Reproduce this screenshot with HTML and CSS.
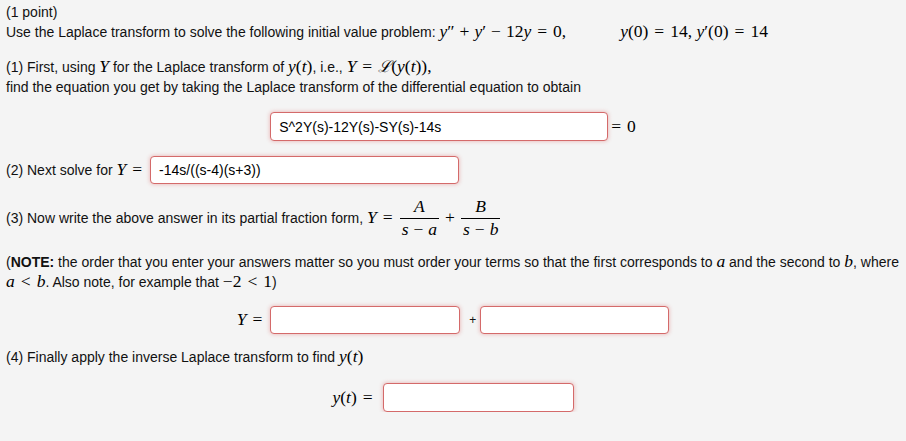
FILE: index.html
```html
<!DOCTYPE html>
<html>
<head>
<meta charset="utf-8">
<link rel="stylesheet" href="styles.css">
</head>
<body>
<div class="wrap">
  <div class="line">(1 point)</div>
  <div class="line">Use the Laplace transform to solve the following initial value problem: <span class="m"><i>y</i>″<span class="bin">+</span><i>y</i>′<span class="bin">−</span>12<i>y</i><span class="op">=</span>0,</span><span class="quad"></span><span class="m"><i>y</i>(0)<span class="op">=</span>14, <i>y</i>′(0)<span class="op">=</span>14</span></div>

  <div class="line gap15">(1) First, using <span class="m"><i>Y</i></span> for the Laplace transform of <span class="m"><i>y</i>(<i>t</i>)</span>, i.e., <span class="m"><i>Y</i><span class="op">=</span><span class="cal">ℒ</span>(<i>y</i>(<i>t</i>)),</span></div>
  <div class="line">find the equation you get by taking the Laplace transform of the differential equation to obtain</div>

  <div class="display d1">
    <div class="ans w338">S^2Y(s)-12Y(s)-SY(s)-14s</div>
    <span class="m eq0"><span class="op">=</span>0</span>
  </div>

  <div class="row r2">
    <span>(2) Next solve for&nbsp;</span><span class="m"><i>Y</i><span class="op">=</span></span>
    <div class="ans w309">-14s/((s-4)(s+3))</div>
  </div>

  <div class="row r3">
    <span>(3) Now write the above answer in its partial fraction form,&nbsp;</span>
    <span class="m"><i>Y</i><span class="op">=</span></span>
    <span class="frac m"><span class="num"><i>A</i></span><span class="den"><i>s</i><span class="bin">−</span><i>a</i></span></span>
    <span class="m plus">+</span>
    <span class="frac m"><span class="num"><i>B</i></span><span class="den"><i>s</i><span class="bin">−</span><i>b</i></span></span>
  </div>

  <div class="note">(<b>NOTE:</b> the order that you enter your answers matter so you must order your terms so that the first corresponds to <span class="m"><i>a</i></span> and the second to <span class="m"><i>b</i></span>, where<br><span class="m"><i>a</i><span class="op">&lt;</span><i>b</i></span>. Also note, for example that <span class="m">−2<span class="op">&lt;</span>1</span>)</div>

  <div class="display d3">
    <span class="m"><i>Y</i><span class="op">=</span></span>
    <div class="ans w190"></div>
    <span class="smallplus">+</span>
    <div class="ans w189"></div>
  </div>

  <div class="line gap4">(4) Finally apply the inverse Laplace transform to find <span class="m"><i>y</i>(<i>t</i>)</span></div>

  <div class="display d4">
    <span class="m"><i>y</i>(<i>t</i>)<span class="op">=</span></span>
    <div class="ans w191"></div>
  </div>
</div>
</body>
</html>
```

FILE: styles.css
```css
html, body {
  margin: 0;
  padding: 0;
  background: #f4f4f4;
}
body {
  font-family: "Liberation Sans", Arial, sans-serif;
  font-size: 14px;
  color: #111;
}
.wrap {
  padding: 2px 6px 0 6px;
}
.line {
  height: 20px;
  line-height: 20px;
  white-space: nowrap;
}
.gap15 {
  margin-top: 15px;
}
.gap4 {
  margin-top: 13px;
}
.m {
  font-family: "Liberation Serif", "Times New Roman", serif;
  font-size: 17.5px;
  color: #000;
  line-height: 1;
}
.m i {
  font-style: italic;
}
.op {
  display: inline-block;
  margin: 0 6px;
  font-style: normal;
}
.bin {
  display: inline-block;
  margin: 0 5px;
  font-style: normal;
}
.cal {
  font-family: "DejaVu Serif", serif;
  font-style: italic;
  font-size: 16px;
}
.quad {
  display: inline-block;
  width: 54px;
}
.display {
  display: flex;
  justify-content: center;
  align-items: center;
}
.row {
  display: flex;
  align-items: center;
}
.d1 {
  margin-top: 15px;
  height: 29px;
}
.eq0 {
  margin-left: 3px;
}
.eq0 .op {
  margin-left: 0;
}
.r2 {
  margin-top: 15px;
  height: 28px;
}
.r2 .ans {
  margin-left: 2px;
}
.r3 {
  margin-top: 16px;
  height: 36px;
}
.frac {
  display: inline-flex;
  flex-direction: column;
  align-items: center;
  padding: 0 1px;
}
.frac .num {
  display: block;
  border-bottom: 1.5px solid #000;
  padding: 0 4px 2px;
  width: 100%;
  text-align: center;
  box-sizing: border-box;
}
.frac .den {
  display: block;
  padding: 2px 2px 0;
  white-space: nowrap;
}
.plus {
  margin: 0 5px;
}
.note {
  margin-top: 16px;
  line-height: 20px;
}
.d3 {
  margin-top: 14px;
  height: 28px;
}
.d3 .ans {
  margin-left: 2px;
}
.smallplus {
  font-size: 12px;
  margin: 0 4px 0 9px;
}
.d3 .smallplus + .ans {
  margin-left: 0;
}
.d4 {
  margin-top: 16px;
  height: 29px;
}
.d4 .ans {
  margin-left: 4px;
}
.ans {
  box-sizing: border-box;
  height: 100%;
  background: #fff;
  border: 1px solid #d46a6a;
  border-radius: 4px;
  box-shadow: 0 0 4px rgba(220, 90, 90, 0.45);
  padding: 0 8px;
  display: flex;
  align-items: center;
  font-family: "Liberation Sans", Arial, sans-serif;
  font-size: 14px;
  color: #000;
  white-space: nowrap;
}
.w338 { width: 338px; }
.w309 { width: 309px; }
.w190 { width: 190px; }
.w189 { width: 189px; }
.w191 { width: 191px; }
```
